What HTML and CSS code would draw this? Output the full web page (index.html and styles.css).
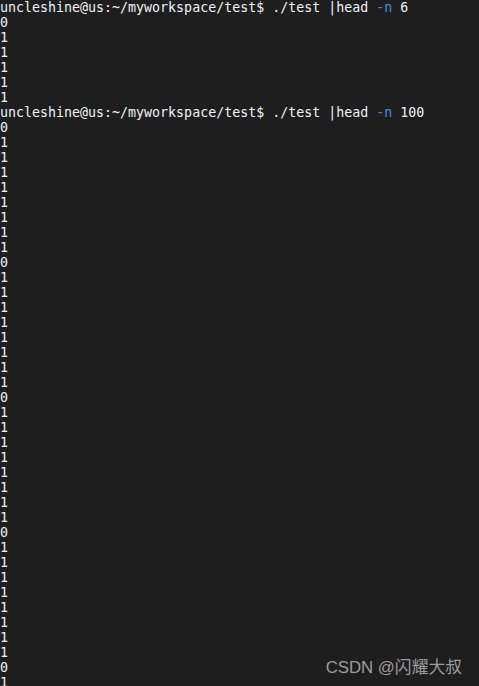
FILE: index.html
```html
<!DOCTYPE html>
<html>
<head>
<meta charset="utf-8">
<link rel="stylesheet" href="styles.css">
</head>
<body>
<pre class="term"><span class="line">uncleshine@us:~/myworkspace/test$ ./test |head <span class="opt">-n</span> 6</span>
0
1
1
1
1
1
<span class="line">uncleshine@us:~/myworkspace/test$ ./test |head <span class="opt">-n</span> 100</span>
0
1
1
1
1
1
1
1
1
0
1
1
1
1
1
1
1
1
0
1
1
1
1
1
1
1
1
0
1
1
1
1
1
1
1
1
0
1
1
1
1</pre>
<div class="watermark">CSDN @闪耀大叔</div>
</body>
</html>
```
FILE: styles.css
```css
html, body {
  margin: 0;
  padding: 0;
  background: #1e1e1e;
  height: 100%;
  overflow: hidden;
}
.term {
  margin: 0;
  padding: 0;
  font-family: "DejaVu Sans Mono", "Liberation Mono", monospace;
  font-size: 13.3px;
  line-height: 15px;
  color: #f2f2f2;
}
.opt {
  color: #3a96dd;
}
.watermark {
  position: absolute;
  right: 17px;
  bottom: 8px;
  font-family: "Liberation Sans", "Noto Sans CJK SC", sans-serif;
  font-size: 16.8px;
  line-height: 20px;
  color: rgba(200, 200, 200, 0.75);
}
```
